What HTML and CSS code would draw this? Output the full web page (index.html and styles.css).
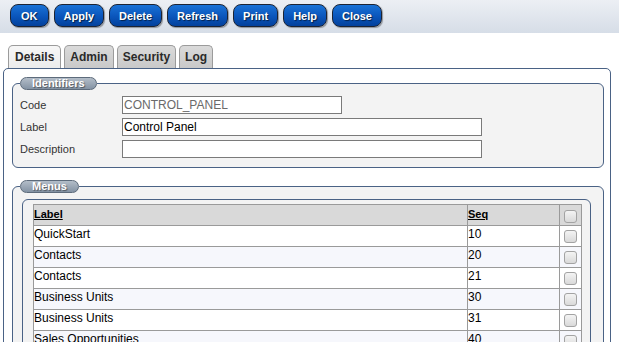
FILE: index.html
```html
<!DOCTYPE html>
<html lang="en">
<head>
    <meta charset="UTF-8">
    <title>Menu Group - Control Panel</title>
    <link rel="stylesheet" href="styles.css">
</head>
<body>

    <div class="toolbar">
        <button class="tb-btn">OK</button>
        <button class="tb-btn">Apply</button>
        <button class="tb-btn">Delete</button>
        <button class="tb-btn">Refresh</button>
        <button class="tb-btn">Print</button>
        <button class="tb-btn">Help</button>
        <button class="tb-btn">Close</button>
    </div>

    <ul class="tabs">
        <li class="tab active">Details</li>
        <li class="tab">Admin</li>
        <li class="tab">Security</li>
        <li class="tab">Log</li>
    </ul>

    <div class="panel">

        <fieldset class="group">
            <legend>Identifiers</legend>
            <div class="field-row">
                <label for="code">Code</label>
                <input type="text" id="code" class="readonly short" value="CONTROL_PANEL" readonly>
            </div>
            <div class="field-row">
                <label for="label">Label</label>
                <input type="text" id="label" value="Control Panel">
            </div>
            <div class="field-row">
                <label for="description">Description</label>
                <input type="text" id="description" value="">
            </div>
        </fieldset>

        <fieldset class="group menus">
            <legend>Menus</legend>
            <div class="grid-box">
                <table class="grid">
                    <colgroup>
                        <col class="col-label">
                        <col class="col-seq">
                        <col class="col-check">
                    </colgroup>
                    <thead>
                        <tr>
                            <th><a href="#">Label</a></th>
                            <th><a href="#">Seq</a></th>
                            <th class="check"><input type="checkbox"></th>
                        </tr>
                    </thead>
                    <tbody>
                        <tr><td>QuickStart</td><td>10</td><td class="check"><input type="checkbox"></td></tr>
                        <tr><td>Contacts</td><td>20</td><td class="check"><input type="checkbox"></td></tr>
                        <tr><td>Contacts</td><td>21</td><td class="check"><input type="checkbox"></td></tr>
                        <tr><td>Business Units</td><td>30</td><td class="check"><input type="checkbox"></td></tr>
                        <tr><td>Business Units</td><td>31</td><td class="check"><input type="checkbox"></td></tr>
                        <tr><td>Sales Opportunities</td><td>40</td><td class="check"><input type="checkbox"></td></tr>
                        <tr><td>Sales Opportunities</td><td>41</td><td class="check"><input type="checkbox"></td></tr>
                    </tbody>
                </table>
            </div>
        </fieldset>

    </div>

</body>
</html>
```

FILE: styles.css
```css
:root {
    --panel-border: #4a6285;
    --group-bg: #f3f3f3;
    --grid-line: #9a9a9a;
    --text-color: #222;
}

* { box-sizing: border-box; }

body {
    margin: 0;
    font-family: 'Liberation Sans', Arial, sans-serif;
    font-size: 12px;
    color: var(--text-color);
    background: #fff;
}

/* toolbar */
.toolbar {
    display: flex;
    gap: 5px;
    height: 33px;
    padding: 4px 10px 0;
    background: linear-gradient(#eceff4, #d6dde7);
}

.tb-btn {
    height: 23px;
    padding: 0 9px;
    border: 1px solid #1d2433;
    border-radius: 8px;
    background: linear-gradient(#1a72d6, #0a55bb 55%, #03419c);
    box-shadow: 1px 1px 1px rgba(0,0,0,0.35);
    color: #fff;
    font-family: 'Liberation Sans', Arial, sans-serif;
    font-size: 11px;
    font-weight: bold;
    text-shadow: 1px 1px 1px rgba(0,0,0,0.6);
    cursor: pointer;
}
.tb-btn:first-child { padding: 0 10px; }

/* tabs */
.tabs {
    display: flex;
    gap: 3px;
    list-style: none;
    margin: 12px 0 0;
    padding: 0 0 0 8px;
}

.tab {
    height: 23px;
    padding: 4px 5px 0;
    border: 1px solid #9b9b9b;
    border-bottom: none;
    border-radius: 5px 5px 0 0;
    background: linear-gradient(#dadada, #c9c9c9);
    font-weight: bold;
    color: #2a2a2a;
}
.tab.active {
    padding: 4px 6px 0;
    background: linear-gradient(#f7f7f7, #ececec);
}

/* main panel */
.panel {
    margin: 0 8px 0 3px;
    padding: 0 6px 40px 8px;
    border: 1px solid var(--panel-border);
    border-radius: 5px;
}

.group {
    margin: 8px 0 0;
    padding: 6px 7px 9px;
    border: 1px solid var(--panel-border);
    border-radius: 6px;
    background: var(--group-bg);
    min-width: 0;
}
.group.menus {
    margin-top: 12px;
}

.group legend {
    height: 13px;
    padding: 0 11px;
    border: 1px solid #5d6b7b;
    border-radius: 7px;
    background: linear-gradient(#b3bdc8, #8493a4);
    color: #fff;
    font-size: 11px;
    font-weight: bold;
    line-height: 11px;
    text-shadow: 1px 1px 1px rgba(0,0,0,0.45);
}

.field-row {
    display: flex;
    align-items: center;
    height: 18px;
    margin-bottom: 4px;
}
.field-row:last-child { margin-bottom: 0; }

.field-row label {
    width: 102px;
    font-size: 11px;
    color: #333;
}

.field-row input {
    width: 360px;
    height: 18px;
    padding: 0 1px;
    border: 1px solid #7a7a7a;
    font-family: 'Liberation Sans', Arial, sans-serif;
    font-size: 12px;
    color: #000;
    background: #fff;
}
.field-row input.short { width: 220px; }
.field-row input.readonly { color: #6a6a6a; }

/* menus grid */
.grid-box {
    margin: 0 5px 0 2px;
    padding: 4px 8px 0 10px;
    border: 1px solid var(--panel-border);
    border-radius: 6px;
    background: var(--group-bg);
}

.grid {
    width: 100%;
    border-collapse: collapse;
    table-layout: fixed;
}
.col-seq { width: 92px; }
.col-check { width: 22px; }

.grid th,
.grid td {
    height: 21px;
    padding: 1px 1px 0 0;
    border: 1px solid var(--grid-line);
    text-align: left;
    vertical-align: top;
    line-height: 15px;
    white-space: nowrap;
    overflow: hidden;
}

.grid th {
    background: #d9d9d9;
    padding-top: 2px;
    font-size: 11px;
}
.grid th a {
    color: #000;
    font-weight: bold;
}

.grid td { color: #000; }
.grid tbody tr:nth-child(odd) td { background: #fff; }
.grid tbody tr:nth-child(even) td { background: #f6f7fc; }

.grid .check { text-align: center; padding-right: 0; }

.grid input[type="checkbox"] {
    appearance: none;
    width: 13px;
    height: 13px;
    margin: 3px 0 0;
    border: 1px solid #a3a3a3;
    border-radius: 3px;
    background: linear-gradient(#f4f4f4, #d9d9d9);
    vertical-align: top;
}
```
